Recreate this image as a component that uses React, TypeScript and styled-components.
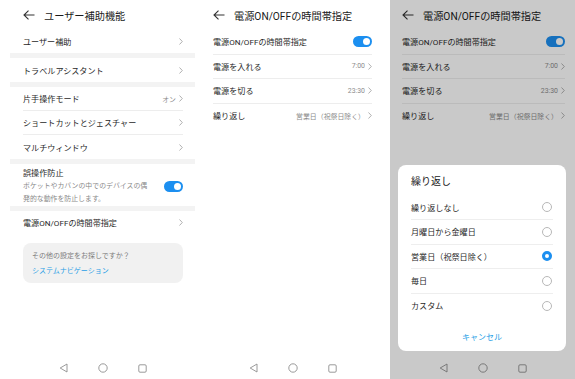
import React from "react";
import styled, { createGlobalStyle } from "styled-components";

const GlobalStyle = createGlobalStyle`
  html, body {
    margin: 0;
    padding: 0;
    background: #fff;
  }
  body {
    font-family: Roboto, "Noto Sans CJK JP", sans-serif;
    color: #1f1f1f;
  }
`;

const Frame = styled.div`
  display: flex;
  width: 575px;
  height: 379px;
  overflow: hidden;
`;

const Screen = styled.div<{ $width: number; $pl: number; $pr: number }>`
  --pl: ${(p) => p.$pl}px;
  --pr: ${(p) => p.$pr}px;
  position: relative;
  display: flex;
  flex-direction: column;
  width: ${(p) => p.$width}px;
  height: 379px;
  flex-shrink: 0;
  background: #fff;
  overflow: hidden;
`;

const Header = styled.div`
  display: flex;
  align-items: center;
  gap: 9px;
  height: 30px;
  padding-left: var(--pl);
`;

const Title = styled.div`
  font-size: 10.2px;
  color: #1a1a1a;
  white-space: nowrap;
`;

const Row = styled.div<{ $h?: number; $divider?: boolean }>`
  display: flex;
  align-items: center;
  justify-content: space-between;
  height: ${(p) => p.$h ?? 24}px;
  margin: 0 var(--pr) 0 var(--pl);
  box-sizing: border-box;
  border-bottom: ${(p) => (p.$divider ? "1px solid #ededed" : "none")};
`;

const Label = styled.span`
  font-size: 8.1px;
  color: #1f1f1f;
  white-space: nowrap;
`;

const Trail = styled.span`
  display: flex;
  align-items: center;
  gap: 3px;
`;

const Value = styled.span`
  font-size: 6.9px;
  color: #8c8c8c;
  white-space: nowrap;
`;

const Band = styled.div`
  height: 5px;
  margin-left: 10px;
  background: #f3f3f3;
`;

const TallRow = styled.div`
  display: flex;
  align-items: center;
  justify-content: space-between;
  margin: 0 var(--pr) 0 var(--pl);
  padding: 3px 0 1px;
`;

const TextStack = styled.div`
  display: flex;
  flex-direction: column;
`;

const TallTitle = styled.span`
  font-size: 8.1px;
  line-height: 13px;
`;

const Sub = styled.span`
  font-size: 6.9px;
  line-height: 12.5px;
  color: #8a8a8a;
  width: 128px;
`;

const Switch = styled.span`
  position: relative;
  width: 19px;
  height: 11px;
  border-radius: 6px;
  background: #1c8ff0;
  flex-shrink: 0;

  &::after {
    content: "";
    position: absolute;
    top: 2px;
    right: 2px;
    width: 7px;
    height: 7px;
    border-radius: 50%;
    background: #fff;
  }
`;

const Card = styled.div`
  margin: 9px var(--pr) 0 var(--pl);
  padding: 7px 9px 6px;
  border-radius: 8px;
  background: #f1f1f1;
  display: flex;
  flex-direction: column;
  gap: 3px;
`;

const CardText = styled.span`
  font-size: 7px;
  line-height: 12px;
  color: #7d7d7d;
`;

const CardLink = styled.span`
  font-size: 7px;
  line-height: 12px;
  color: #2a9fe6;
`;

const NavBar = styled.div<{ $shift?: number }>`
  margin-top: auto;
  height: 22px;
  display: flex;
  align-items: center;
  justify-content: center;
  gap: 30px;
  padding-left: ${(p) => (p.$shift ?? 0) * 2}px;
`;

const Overlay = styled.div`
  position: absolute;
  inset: 0;
  background: rgba(0, 0, 0, 0.21);
  display: flex;
  flex-direction: column;
  justify-content: flex-end;
  padding: 0 9px 28px 8px;
`;

const Dialog = styled.div`
  background: #fff;
  border-radius: 8px;
  padding: 0 13px;
`;

const DialogTitle = styled.div`
  height: 31px;
  display: flex;
  align-items: center;
  font-size: 10px;
  color: #1a1a1a;
`;

const Option = styled.div<{ $last?: boolean }>`
  height: 24.5px;
  box-sizing: border-box;
  display: flex;
  align-items: center;
  justify-content: space-between;
  border-bottom: ${(p) => (p.$last ? "none" : "1px solid #eeeeee")};
`;

const OptionLabel = styled.span`
  font-size: 8.1px;
  color: #1f1f1f;
`;

const Radio = styled.span<{ $on?: boolean }>`
  width: 10px;
  height: 10px;
  box-sizing: border-box;
  border-radius: 50%;
  border: ${(p) => (p.$on ? "3px solid #1c8ff0" : "1px solid #b8b8b8")};
  background: #fff;
  margin-right: 1px;
`;

const Cancel = styled.div`
  height: 33px;
  padding-top: 3px;
  box-sizing: border-box;
  display: flex;
  align-items: center;
  justify-content: center;
  font-size: 8px;
  color: #2a9fe6;
`;

const BackArrow = () => (
  <svg width="12" height="10" viewBox="0 0 12 10">
    <path
      d="M11.5 5H1M5.5 0.7L1 5l4.5 4.3"
      fill="none"
      stroke="#333"
      strokeWidth="1.1"
    />
  </svg>
);

const Chevron = () => (
  <svg width="4" height="7" viewBox="0 0 4 7">
    <path d="M0.5 0.5L3.3 3.5 0.5 6.5" fill="none" stroke="#a8a8a8" strokeWidth="0.9" />
  </svg>
);

const NavBack = () => (
  <svg width="9" height="10" viewBox="0 0 9 10">
    <path d="M8 1L1.2 5 8 9z" fill="none" stroke="#8e8e8e" strokeWidth="0.9" strokeLinejoin="round" />
  </svg>
);

const NavHome = () => (
  <svg width="10" height="10" viewBox="0 0 10 10">
    <circle cx="5" cy="5" r="4.2" fill="none" stroke="#8e8e8e" strokeWidth="0.9" />
  </svg>
);

const NavRecent = () => (
  <svg width="9" height="9" viewBox="0 0 9 9">
    <rect x="0.8" y="0.8" width="7.4" height="7.4" rx="1.2" fill="none" stroke="#8e8e8e" strokeWidth="0.9" />
  </svg>
);

const Nav = ({ shift }: { shift?: number }) => (
  <NavBar $shift={shift}>
    <NavBack />
    <NavHome />
    <NavRecent />
  </NavBar>
);

const Accessibility = () => (
  <Screen $width={195} $pl={23} $pr={12}>
    <Header>
      <BackArrow />
      <Title>ユーザー補助機能</Title>
    </Header>
    <Row $h={23}>
      <Label>ユーザー補助</Label>
      <Chevron />
    </Row>
    <Band />
    <Row>
      <Label>トラベルアシスタント</Label>
      <Chevron />
    </Row>
    <Band />
    <Row $divider>
      <Label>片手操作モード</Label>
      <Trail>
        <Value>オン</Value>
        <Chevron />
      </Trail>
    </Row>
    <Row $divider>
      <Label>ショートカットとジェスチャー</Label>
      <Chevron />
    </Row>
    <Row>
      <Label>マルチウィンドウ</Label>
      <Chevron />
    </Row>
    <Band />
    <TallRow>
      <TextStack>
        <TallTitle>誤操作防止</TallTitle>
        <Sub>ポケットやカバンの中でのデバイスの偶発的な動作を防止します。</Sub>
      </TextStack>
      <Switch />
    </TallRow>
    <Band />
    <Row $h={23}>
      <Label>電源ON/OFFの時間帯指定</Label>
      <Chevron />
    </Row>
    <Card>
      <CardText>その他の設定をお探しですか？</CardText>
      <CardLink>システムナビゲーション</CardLink>
    </Card>
    <Nav shift={5.5} />
  </Screen>
);

const timerRows = [
  { label: "電源を入れる", value: "7:00" },
  { label: "電源を切る", value: "23:30" },
  { label: "繰り返し", value: "営業日（祝祭日除く）" },
];

const TimerContent = () => (
  <>
    <Header>
      <BackArrow />
      <Title>電源ON/OFFの時間帯指定</Title>
    </Header>
    <Row $h={24.5} $divider>
      <Label>電源ON/OFFの時間帯指定</Label>
      <Switch />
    </Row>
    {timerRows.map((r, i) => (
      <Row key={r.label} $h={24.5} $divider={i < timerRows.length - 1}>
        <Label>{r.label}</Label>
        <Trail>
          <Value>{r.value}</Value>
          <Chevron />
        </Trail>
      </Row>
    ))}
    <Nav />
  </>
);

const repeatOptions = [
  "繰り返しなし",
  "月曜日から金曜日",
  "営業日（祝祭日除く）",
  "毎日",
  "カスタム",
];

const App = () => (
  <>
    <GlobalStyle />
    <Frame>
      <Accessibility />
      <Screen $width={195} $pl={18} $pr={18}>
        <TimerContent />
      </Screen>
      <Screen $width={185} $pl={12} $pr={10}>
        <TimerContent />
        <Overlay>
          <Dialog>
            <DialogTitle>繰り返し</DialogTitle>
            {repeatOptions.map((o, i) => (
              <Option key={o} $last={i === repeatOptions.length - 1}>
                <OptionLabel>{o}</OptionLabel>
                <Radio $on={i === 2} />
              </Option>
            ))}
            <Cancel>キャンセル</Cancel>
          </Dialog>
        </Overlay>
      </Screen>
    </Frame>
  </>
);

export default App;
